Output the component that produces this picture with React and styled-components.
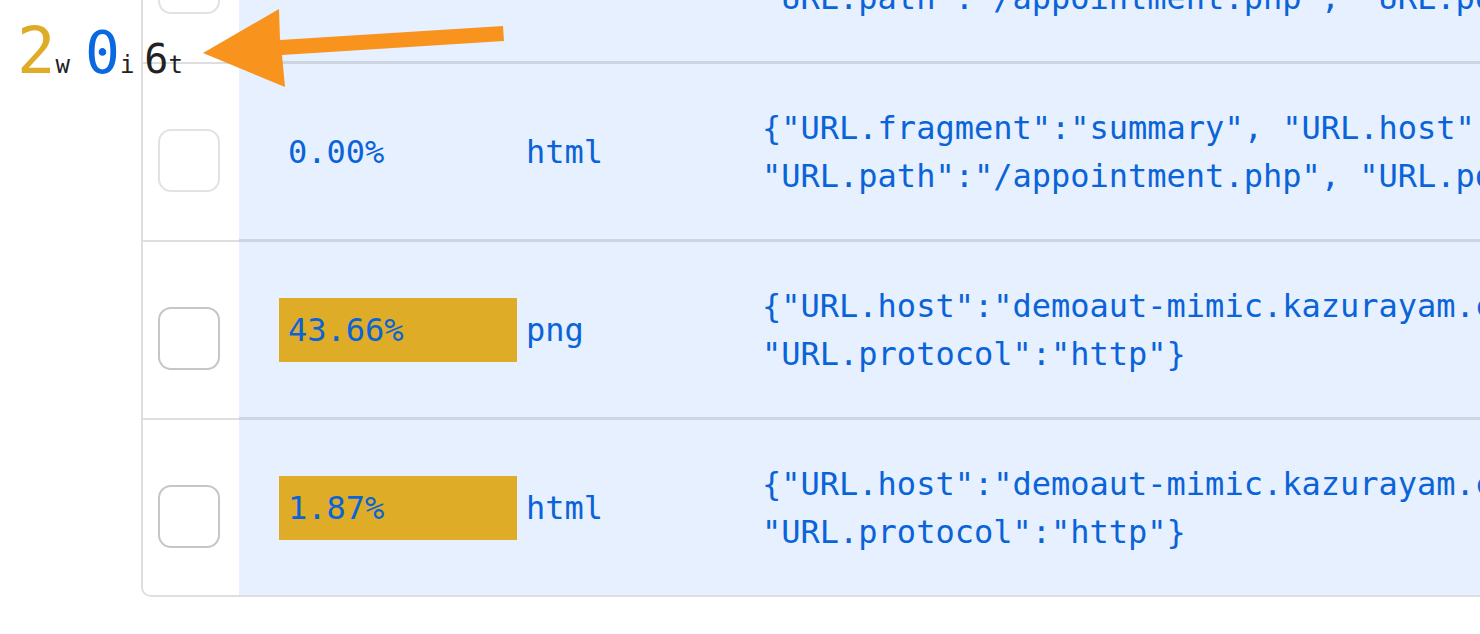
import React from "react"
import styled, {createGlobalStyle} from "styled-components"

const GlobalStyle = createGlobalStyle`
  html, body {
    margin: 0;
    padding: 0;
    background: #ffffff;
    overflow: hidden;
  }
`

const MONO = `"DejaVu Sans Mono", "Liberation Mono", monospace`

const rows = [
  {
    percent: "0.00%",
    hit: false,
    type: "html",
    muted: true,
    json: [
      `{"URL.fragment":"summary", "URL.host":"demoaut-mimic.kazurayam.com",`,
      `"URL.path":"/appointment.php", "URL.port":"80", "URL.protocol":"http"}`,
    ],
  },
  {
    percent: "0.00%",
    hit: false,
    type: "html",
    muted: true,
    json: [
      `{"URL.fragment":"summary", "URL.host":"demoaut-mimic.kazurayam.com",`,
      `"URL.path":"/appointment.php", "URL.port":"80", "URL.protocol":"http"}`,
    ],
  },
  {
    percent: "43.66%",
    hit: true,
    type: "png",
    muted: false,
    json: [
      `{"URL.host":"demoaut-mimic.kazurayam.com", "URL.path":"/img/logo.png",`,
      `"URL.protocol":"http"}`,
    ],
  },
  {
    percent: "1.87%",
    hit: true,
    type: "html",
    muted: false,
    json: [
      `{"URL.host":"demoaut-mimic.kazurayam.com", "URL.path":"/profile.php",`,
      `"URL.protocol":"http"}`,
    ],
  },
]

function App(){
  return(
    <Page>
      <GlobalStyle />
      <Card>
        {rows.map((row, index) => {
          return (
            <Row key={index} last={index === rows.length - 1}>
              <CheckCell>
                <Checkbox muted={row.muted} />
              </CheckCell>
              <DataCell>
                <PercentCell>
                  <Bar hit={row.hit}>{row.percent}</Bar>
                </PercentCell>
                <TypeCell>{row.type}</TypeCell>
                <JsonCell>
                  {row.json.map((line, i) => <JsonLine key={i}>{line}</JsonLine>)}
                </JsonCell>
              </DataCell>
            </Row>
          )
        })}
      </Card>

      <Counter>
        <Num color="#deac26" size={64}>2</Num><Unit>w</Unit>
        <Gap w={15} />
        <Num color="#0a68e0" size={58}>0</Num><Unit>i</Unit>
        <Gap w={10} />
        <Num color="#222222" size={40}>6</Num><Unit>t</Unit>
      </Counter>

      <Arrow viewBox="0 0 320 95" width="320" height="95">
        <polygon
          points="8,53 84,9 85,40 308,26 309,41 87,55 90,87"
          fill="#f8941e"
        />
      </Arrow>
    </Page>
  )
}

const Page = styled.div`
  position: relative;
  width: 1480px;
  height: 634px;
  overflow: hidden;
  background: #ffffff;
`

const Card = styled.div`
  margin-top: -114px;
  margin-left: 141px;
  width: 1800px;
  border-left: 2px solid #dedede;
  border-bottom: 2px solid #dedede;
  border-bottom-left-radius: 10px;
  overflow: hidden;
`

const Row = styled.div`
  display: flex;
  height: ${props => props.last ? "175px" : "178px"};
  & > div {
    border-bottom-width: ${props => props.last ? "0" : ""};
  }
`

const CheckCell = styled.div`
  box-sizing: border-box;
  width: 96px;
  flex: none;
  background: #ffffff;
  border-bottom: 2px solid #dedede;
  padding: 65px 0 0 15px;
`

const Checkbox = styled.div`
  box-sizing: border-box;
  width: 62px;
  height: 63px;
  border-radius: 13px;
  background: #ffffff;
  border: 2px solid ${props => props.muted ? "#e2e2e2" : "#c6c6c6"};
`

const DataCell = styled.div`
  box-sizing: border-box;
  flex: 1;
  display: grid;
  grid-template-columns: 278px 237px 1fr;
  align-items: center;
  background: #e6f0fe;
  border-bottom: 3px solid #cdd5e1;
  color: #0a63d8;
  font-family: ${MONO};
  font-size: 32px;
`

const PercentCell = styled.div`
  padding-left: 40px;
`

const Bar = styled.div`
  box-sizing: border-box;
  width: 238px;
  height: 64px;
  line-height: 64px;
  padding-left: 9px;
  background: ${props => props.hit ? "#deac26" : "transparent"};
`

const TypeCell = styled.div`
  padding-left: 9px;
`

const JsonCell = styled.div`
  padding-left: 8px;
  line-height: 48px;
  overflow: hidden;
`

const JsonLine = styled.div`
  white-space: pre;
`

const Counter = styled.div`
  position: absolute;
  left: 17px;
  top: 19px;
  display: flex;
  align-items: baseline;
  font-family: ${MONO};
  line-height: 1;
`

const Num = styled.span`
  color: ${props => props.color};
  font-size: ${props => props.size}px;
`

const Unit = styled.span`
  color: #222222;
  font-size: 24px;
`

const Gap = styled.span`
  display: inline-block;
  width: ${props => props.w}px;
`

const Arrow = styled.svg`
  position: absolute;
  left: 195px;
  top: 0;
`

export default App
